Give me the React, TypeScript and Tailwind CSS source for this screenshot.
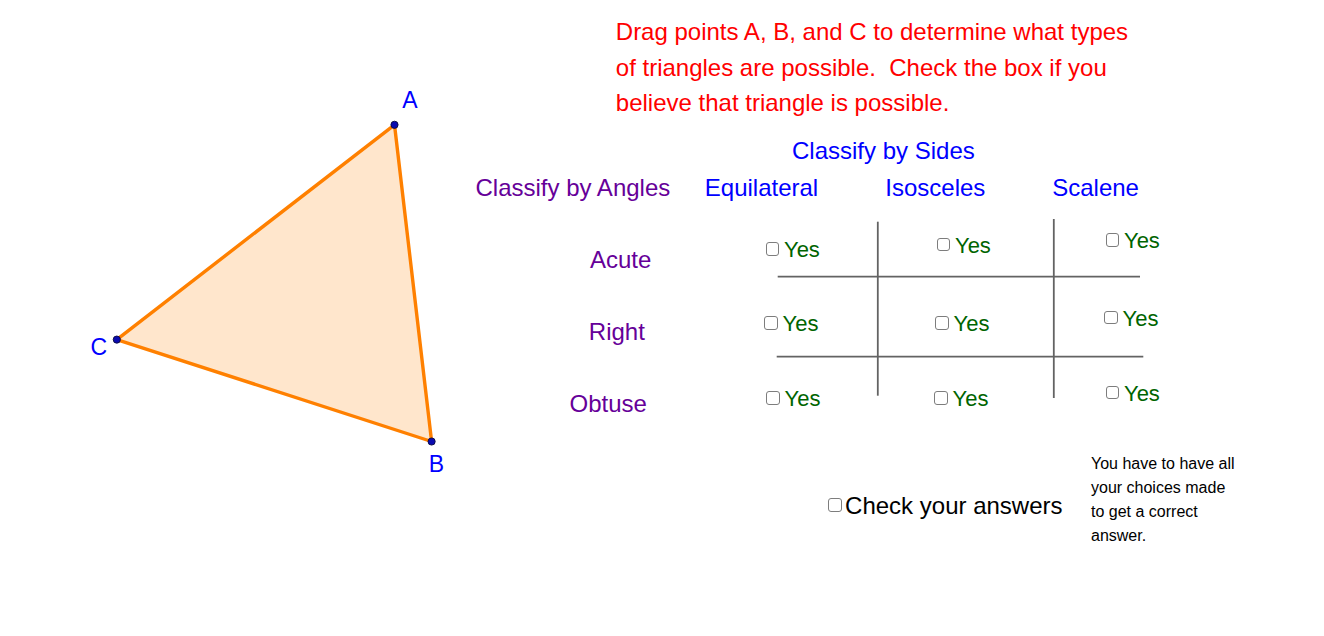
import React from "react";

const yesItems: string[] = [
  "left-[765.7px] top-[242px]",
  "left-[936.7px] top-[237.7px]",
  "left-[1105.7px] top-[233.3px]",
  "left-[764.3px] top-[316px]",
  "left-[935.3px] top-[316px]",
  "left-[1104.3px] top-[310.7px]",
  "left-[766.3px] top-[391px]",
  "left-[934.3px] top-[391px]",
  "left-[1105.7px] top-[385.7px]",
];

function Box() {
  return (
    <span className="block w-[13.5px] h-[13.5px] shrink-0 rounded-[3px] border border-[#7d7d7d] bg-white" />
  );
}

function YesCheck({ pos }: { pos: string }) {
  return (
    <div className={"absolute flex items-start " + pos}>
      <Box />
      <span className="ml-[4.8px] -mt-[3px] text-[22px] leading-none text-[#006400] whitespace-nowrap">
        Yes
      </span>
    </div>
  );
}

export default function App() {
  return (
    <div
      className="relative w-[1324px] h-[636px] overflow-hidden bg-white"
      style={{ fontFamily: '"Liberation Sans", Arial, sans-serif' }}
    >
      <svg className="absolute inset-0" width="1324" height="636" viewBox="0 0 1324 636">
        <polygon
          points="394.5,124.8 431.6,441.5 116.8,339.6"
          fill="#ff8000"
          fillOpacity="0.2"
          stroke="#ff8000"
          strokeWidth="3.4"
          strokeLinejoin="round"
        />
        <g fill="#0a0ab0" stroke="#0a0a40" strokeWidth="0.9">
          <circle cx="394.5" cy="124.8" r="3.6" />
          <circle cx="431.6" cy="441.5" r="3.6" />
          <circle cx="116.8" cy="339.6" r="3.6" />
        </g>
        <g stroke="#636363" strokeWidth="1.8">
          <line x1="777.7" y1="276.7" x2="1140" y2="276.7" />
          <line x1="776.7" y1="356.7" x2="1143.3" y2="356.7" />
          <line x1="877.8" y1="221.7" x2="877.8" y2="395.7" />
          <line x1="1053.8" y1="219" x2="1053.8" y2="398" />
        </g>
      </svg>

      {/* point labels */}
      <span className="absolute left-[402.3px] top-[88.5px] text-[23px] leading-none text-[#0000ff]">A</span>
      <span className="absolute left-[428.8px] top-[453px] text-[23px] leading-none text-[#0000ff]">B</span>
      <span className="absolute left-[90.4px] top-[336.4px] text-[23px] leading-none text-[#0000ff]">C</span>

      {/* instructions */}
      <div className="absolute left-[615.8px] top-[14.4px] text-[24px] leading-[35.5px] text-[#ff0000] whitespace-pre">
        Drag points A, B, and C to determine what types
        <br />
        {"of triangles are possible.  Check the box if you"}
        <br />
        believe that triangle is possible.
      </div>

      {/* headers */}
      <span className="absolute left-[792px] top-[139.3px] text-[24px] leading-none text-[#0000ff] whitespace-nowrap">
        Classify by Sides
      </span>
      <span className="absolute left-[475.5px] top-[175.7px] text-[24px] leading-none text-[#660099] whitespace-nowrap">
        Classify by Angles
      </span>
      <span className="absolute left-[704.8px] top-[175.7px] text-[24px] leading-none text-[#0000ff]">Equilateral</span>
      <span className="absolute left-[885.3px] top-[175.7px] text-[24px] leading-none text-[#0000ff]">Isosceles</span>
      <span className="absolute left-[1052.2px] top-[175.7px] text-[24px] leading-none text-[#0000ff]">Scalene</span>

      <span className="absolute left-[590px] top-[248.3px] text-[24px] leading-none text-[#660099]">Acute</span>
      <span className="absolute left-[588.8px] top-[319.8px] text-[24px] leading-none text-[#660099]">Right</span>
      <span className="absolute left-[569.5px] top-[391.7px] text-[24px] leading-none text-[#660099]">Obtuse</span>

      {yesItems.map((p, i) => (
        <YesCheck key={i} pos={p} />
      ))}

      {/* check answers */}
      <div className="absolute left-[828.3px] top-[498.3px] flex items-start">
        <Box />
        <span className="ml-[3.3px] -mt-[4.1px] text-[24px] leading-none text-black whitespace-nowrap">
          Check your answers
        </span>
      </div>

      <div className="absolute left-[1091px] top-[451.6px] text-[16px] leading-[24px] text-black">
        You have to have all
        <br />
        your choices made
        <br />
        to get a correct
        <br />
        answer.
      </div>
    </div>
  );
}
